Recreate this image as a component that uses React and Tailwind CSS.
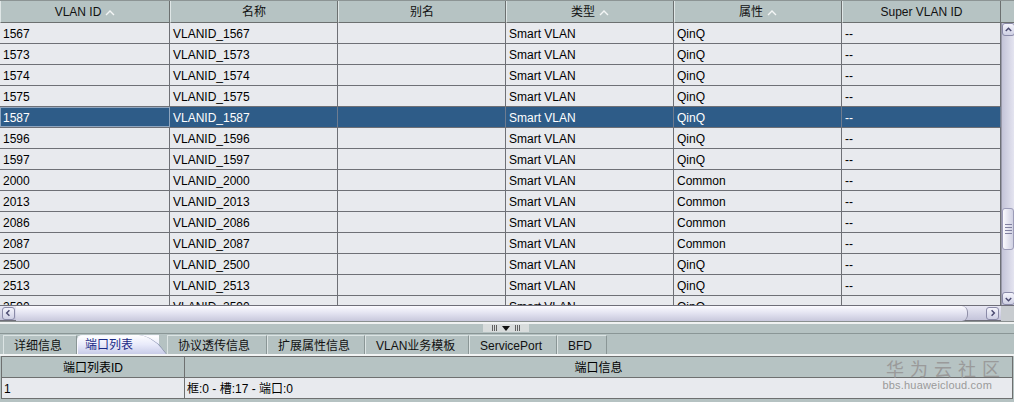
import React from "react";

const FONT = "font-['Liberation_Sans','Noto_Sans_CJK_SC',sans-serif]";

const COLS = ["w-[170px]", "w-[168px]", "w-[168px]", "w-[168px]", "w-[168px]", "w-[159px]"];

const HEAD = [
  { t: "VLAN ID", sort: true },
  { t: "名称" },
  { t: "别名" },
  { t: "类型", sort: true },
  { t: "属性", sort: true },
  { t: "Super VLAN ID" },
];

const ROWS = [
  ["1567", "QinQ"],
  ["1573", "QinQ"],
  ["1574", "QinQ"],
  ["1575", "QinQ"],
  ["1587", "QinQ"],
  ["1596", "QinQ"],
  ["1597", "QinQ"],
  ["2000", "Common"],
  ["2013", "Common"],
  ["2086", "Common"],
  ["2087", "Common"],
  ["2500", "QinQ"],
  ["2513", "QinQ"],
  ["2590", "QinQ"],
];

const TABS = ["详细信息", "端口列表", "协议透传信息", "扩展属性信息", "VLAN业务模板", "ServicePort", "BFD"];
const TAB_W = ["w-[74px]", "w-[90px]", "w-[100px]", "w-[98px]", "w-[104px]", "w-[88px]", "w-[50px]"];

function SortUp() {
  return (
    <svg width="10" height="7" viewBox="0 0 10 7" className="ml-1">
      <polyline points="1,6 5,2 9,6" fill="none" stroke="#f4f6f6" strokeWidth="1.4" />
    </svg>
  );
}

function Arrow({ dir }) {
  const pts = {
    up: "3,7 6,4 9,7",
    down: "3,5 6,8 9,5",
    left: "7,3 4,6 7,9",
    right: "5,3 8,6 5,9",
  }[dir];
  return (
    <div className="w-[13px] h-[13px] flex items-center justify-center rounded-[3px] border border-[#8a8aa8] bg-gradient-to-b from-[#f4f4fc] to-[#cfd0e4]">
      <svg width="12" height="12" viewBox="0 0 12 12">
        <polyline points={pts} fill="none" stroke="#4a4a70" strokeWidth="1.6" />
      </svg>
    </div>
  );
}

function VScroll() {
  return (
    <div className="w-[13px] flex flex-col bg-gradient-to-r from-[#c4c4d8] to-[#e4e4f0] border-l border-[#9a9aaa]">
      <Arrow dir="up" />
      <div className="flex-1 flex flex-col pt-[172px]">
        <div className="h-[42px] rounded-[3px] border border-[#9c9cb8] bg-gradient-to-r from-[#fafafe] to-[#cfd0e2] flex flex-col items-center justify-center gap-[2px]">
          <div className="w-[7px] h-px bg-[#8080a0]" />
          <div className="w-[7px] h-px bg-[#8080a0]" />
          <div className="w-[7px] h-px bg-[#8080a0]" />
          <div className="w-[7px] h-px bg-[#8080a0]" />
        </div>
      </div>
      <Arrow dir="down" />
    </div>
  );
}

function HScroll() {
  return (
    <div className="h-[16px] flex border-t border-[#6e6e78] bg-[#d5d7dc]">
      <div className="w-[1001px] flex items-center px-[2px] bg-gradient-to-b from-[#e8e8f4] to-[#c4c4da] border-b border-[#6e6e78]">
        <Arrow dir="left" />
        <div className="w-[952px] h-[15px] ml-px rounded-r-[6px] border-r border-[#9090a8] bg-gradient-to-b from-[#fbfbff] via-[#e2e2f0] to-[#c8c8dc]" />
        <div className="flex-1" />
        <Arrow dir="right" />
      </div>
      <div className="flex-1 bg-[#c8ccd0]" />
    </div>
  );
}

function Splitter() {
  return (
    <div className="h-[12px] flex flex-col bg-[#b5c2c2]">
      <div className="h-[3px] bg-[#f0f2f2] border-t border-[#8a9090]" />
      <div className="flex justify-center">
        <div className="w-[46px] h-[8px] bg-[#d8dcdc] flex items-center justify-center gap-[5px] ml-[-2px]">
          <div className="flex gap-[1px]">
            <div className="w-px h-[6px] bg-[#606060]" />
            <div className="w-px h-[6px] bg-[#606060]" />
            <div className="w-px h-[6px] bg-[#606060]" />
          </div>
          <svg width="8" height="5" viewBox="0 0 8 5">
            <polygon points="0,0 8,0 4,5" fill="#111" />
          </svg>
          <div className="flex gap-[1px]">
            <div className="w-px h-[6px] bg-[#606060]" />
            <div className="w-px h-[6px] bg-[#606060]" />
            <div className="w-px h-[6px] bg-[#606060]" />
          </div>
        </div>
      </div>
    </div>
  );
}

function Tabs() {
  return (
    <div className="h-[21px] flex items-end pl-[3px] border-t border-[#8a9696] bg-[#b5c2c2]">
      {TABS.map((t, i) =>
        i === 1 ? (
          <div
            key={t}
            className={`${TAB_W[i]} h-[19px] relative flex items-center pl-[8px] pt-[1px] text-[#1a2a86]`}
          >
            <div className="absolute inset-0 mr-[8px] rounded-tl-[5px] border-t border-l border-[#f8f8ff] bg-gradient-to-b from-[#ffffff] via-[#e8eafa] to-[#c8cce8]" />
            <div className="absolute top-0 right-0 bottom-0 w-[24px] rounded-tr-[14px] skew-x-[38deg] origin-bottom bg-gradient-to-b from-[#ffffff] via-[#e8eafa] to-[#c8cce8] border-r border-[#8890b0]" />
            <span className="relative">{t}</span>
          </div>
        ) : (
          <div
            key={t}
            className={`${TAB_W[i]} h-[19px] flex items-center pl-[10px] pt-[1px] border-l border-t border-[#dce4e4] border-r border-r-[#8a9696] text-[#111]`}
          >
            {t}
          </div>
        )
      )}
    </div>
  );
}

export default function App() {
  return (
    <div className={`${FONT} w-[1014px] h-[402px] overflow-hidden bg-[#b5c2c2] text-[12px] leading-none text-black flex flex-col`}>
      {/* top table */}
      <div className="h-[23px] flex border-t border-[#8c9494] bg-[#b6c3c3]">
        {HEAD.map((h, i) => (
          <div
            key={h.t}
            className={`${COLS[i]} flex items-center justify-center pt-[1px] border-r border-b border-[#6c7070] border-l border-l-[#dfe6e6] text-[#111]`}
          >
            {h.t}
            {h.sort && <SortUp />}
          </div>
        ))}
        <div className="flex-1 border-b border-[#6c7070]" />
      </div>
      <div className="h-[282px] flex overflow-hidden">
        <div className="w-[1001px] flex flex-col">
          {ROWS.map((r) => {
            const sel = r[0] === "1587";
            const cells = [r[0], `VLANID_${r[0]}`, "", "Smart VLAN", r[1], "--"];
            return (
              <div
                key={r[0]}
                className={`h-[21px] shrink-0 flex border-b border-[#6e7076] ${sel ? "bg-[#2e5c88] text-white" : "bg-[#e8eaee]"}`}
              >
                {cells.map((c, j) => (
                  <div
                    key={j}
                    className={`${COLS[j]} flex items-center pl-[3px] pt-[2px] border-r ${sel ? "border-[#6e7c90]" : "border-[#6e7076]"} ${sel && j === 0 ? "outline outline-1 -outline-offset-1 outline-[#8fa6c0]" : ""}`}
                  >
                    {c}
                  </div>
                ))}
              </div>
            );
          })}
        </div>
        <VScroll />
      </div>
      <HScroll />
      <Splitter />
      <Tabs />
      {/* bottom table */}
      <div className="relative flex-1 flex flex-col border-t-2 border-[#f2f4f4]">
        <div className="mx-[1px] border border-[#6e7070] flex flex-col">
          <div className="h-[21px] flex bg-[#b6c3c3] border-b border-[#6e7070]">
            <div className="w-[183px] flex items-center justify-center pt-[1px] border-r border-[#6e7070]">端口列表ID</div>
            <div className="flex-1 flex items-center justify-center pt-[1px]">端口信息</div>
          </div>
          <div className="h-[20px] flex bg-[#e8eaee]">
            <div className="w-[183px] flex items-center pl-[2px] pt-[1px] border-r border-[#6e7070]">1</div>
            <div className="flex-1 flex items-center pl-[2px] pt-[1px]">框:0 - 槽:17 - 端口:0</div>
          </div>
        </div>
        <div className="absolute right-[14px] top-[3px] flex flex-col items-end text-[#9a9a9a]">
          <div className="text-[18px] leading-none tracking-[6px] mr-[-6px] font-['Noto_Sans_CJK_SC',sans-serif]">华为云社区</div>
          <div className="text-[11px] mt-[3px] mr-[8px] tracking-[0.2px]">bbs.huaweicloud.com</div>
        </div>
      </div>
    </div>
  );
}
